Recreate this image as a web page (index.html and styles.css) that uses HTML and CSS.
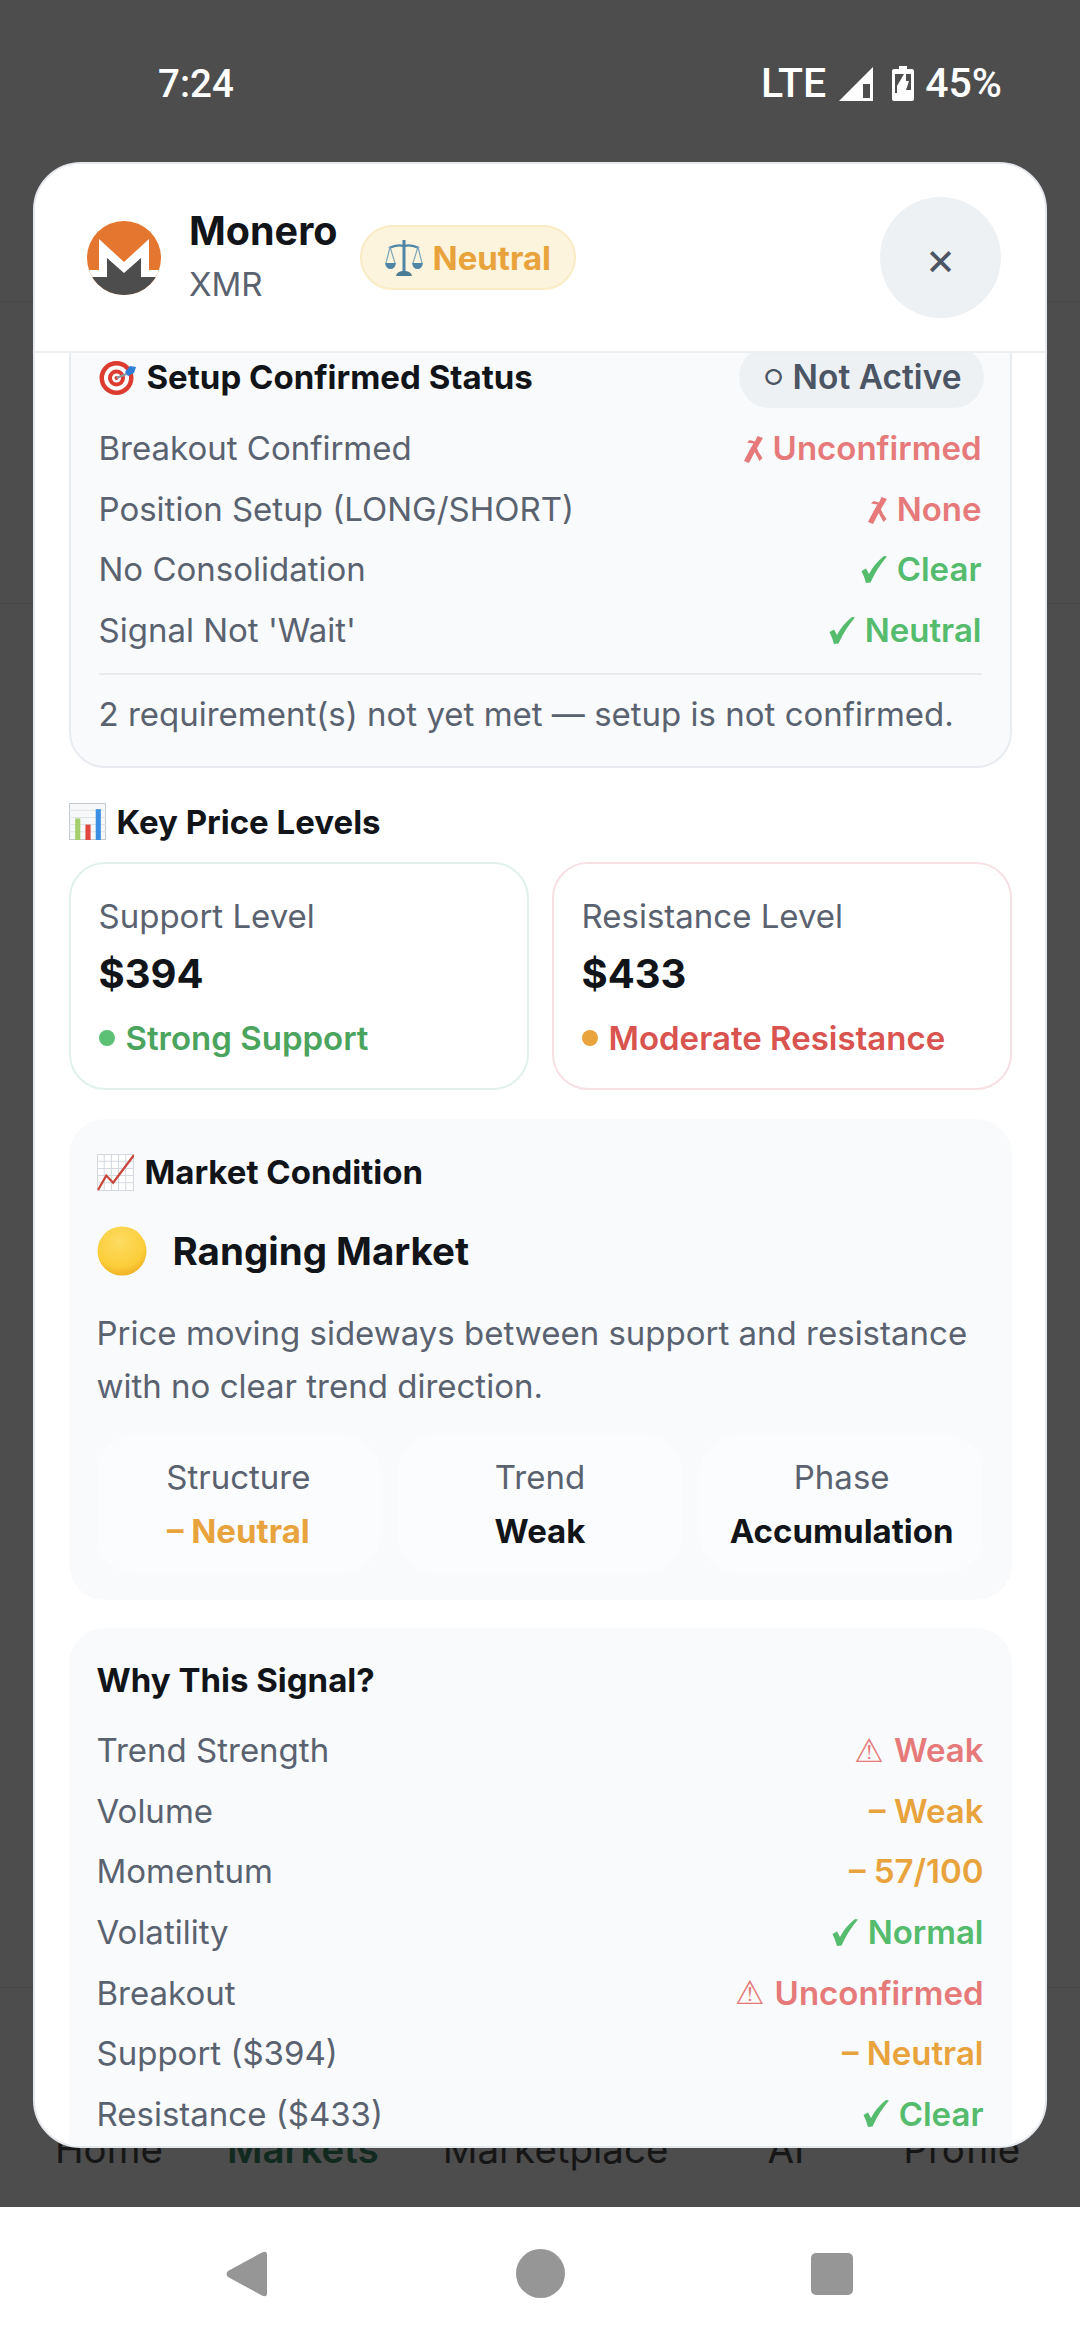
FILE: index.html
```html
<!DOCTYPE html>
<html lang="en">
<head>
    <meta charset="UTF-8">
    <meta name="viewport" content="width=device-width, initial-scale=1.0">
    <title>Monero - XMR</title>
    <link rel="stylesheet" href="styles.css">
</head>
<body>
    <svg class="icon-defs">
        <symbol id="check" viewBox="0 0 26 27"><path d="M0.5 15L5 12.5L8 18Q13 8 23 0L26 0.5Q16 12 9.5 26.5L5 27Q3 20 0.5 15Z"/></symbol>
        <symbol id="cross" viewBox="0 0 19 27"><path d="M13.5 0L19 2Q12 13 5 27L0 25Q6 13 9.5 7.5L3 6.5L5.5 4L11 5.5Z"/><path d="M9 12.5L12 10Q14 16 18.5 22L15.5 25Q12 19 9 12.5Z"/></symbol>
    </svg>
    <div class="screen">
        <div class="backdrop">
            <div class="status-bar">
                <span class="clock">7:24</span>
                <div class="status-right">
                    <span>LTE</span>
                    <svg class="signal" viewBox="0 0 34 34"><path d="M34 0V34H0Z" fill="#fff"/><path d="M24 17H31V31H24Z" fill="#4d4d4d"/></svg>
                    <svg class="battery" viewBox="0 0 22 35"><path d="M7 0H15V3H20Q22 3 22 5V33Q22 35 20 35H2Q0 35 0 33V5Q0 3 2 3H7Z" fill="#fff"/><path d="M3 8H12L5 20V27H3Z" fill="#4d4d4d"/><path d="M14 8H19V24H14L17 15H14Z" fill="#4d4d4d"/><path d="M13 7L6 20H10L8 31L16 16H12Z" fill="#fff"/></svg>
                    <span class="battery-pct">45%</span>
                </div>
            </div>
            <div class="tab-labels">
                <span>Home</span>
                <span class="tab-active">Markets</span>
                <span>Marketplace</span>
                <span class="tab-wide">AI</span>
                <span class="tab-wide">Profile</span>
            </div>
        </div>

        <div class="modal">
            <div class="modal-header">
                <svg class="coin" viewBox="0 0 74 74">
                    <defs><clipPath id="coinClip"><circle cx="37" cy="37" r="37"/></clipPath></defs>
                    <g clip-path="url(#coinClip)">
                        <rect width="74" height="74" fill="#e4762f"/>
                        <path d="M12 18L37 41L62 18V49H74V56H0V49H12Z" fill="#fff"/>
                        <path d="M20 37L37 52L54 37V56H74V74H0V56H20Z" fill="#4d4d4d"/>
                    </g>
                </svg>
                <div class="coin-name">
                    <div class="coin-title">Monero</div>
                    <div class="coin-symbol">XMR</div>
                </div>
                <div class="signal-badge">
                    <svg class="scales" viewBox="0 0 38 38">
                        <path d="M19 1V33" stroke="#4f86a6" stroke-width="3" fill="none"/>
                        <path d="M4 9Q12 5 19 7Q26 5 34 9" stroke="#4f86a6" stroke-width="2.4" fill="none"/>
                        <path d="M5 8L1 24M5 8L10 24M33 8L28 24M33 8L37 24" stroke="#7fa6b8" stroke-width="1.2" fill="none"/>
                        <path d="M0 24H11Q10 30 5.5 30Q1 30 0 24ZM27 24H38Q37 30 32.5 30Q28 30 27 24Z" fill="#4f86a6"/>
                        <path d="M11 37Q12 32 19 32Q26 32 27 37Z" fill="#4a7c96"/>
                    </svg>
                    <span>Neutral</span>
                </div>
                <button class="close-btn">×</button>
            </div>

            <div class="modal-body">
                <div class="setup-card">
                    <div class="setup-head">
                        <div class="card-title">
                            <svg class="emoji" viewBox="0 0 37 37">
                                <circle cx="17.5" cy="19" r="17" fill="#dd3b30"/>
                                <circle cx="17.5" cy="19" r="12.5" fill="#fff"/>
                                <circle cx="17.5" cy="19" r="8.5" fill="#dd3b30"/>
                                <circle cx="17.5" cy="19" r="4.5" fill="#fff"/>
                                <circle cx="17.5" cy="19" r="2" fill="#dd3b30"/>
                                <path d="M17.5 19L30 14" stroke="#8a9aa5" stroke-width="2"/>
                                <path d="M26 13L31 7L37 8L35 14L29 17Z" fill="#2f7fd6"/>
                            </svg>
                            <span>Setup Confirmed Status</span>
                        </div>
                        <div class="status-pill"><span class="ring">○</span> Not Active</div>
                    </div>
                    <div class="row"><span>Breakout Confirmed</span><span class="val bad"><svg class="mark-cross"><use href="#cross"/></svg> Unconfirmed</span></div>
                    <div class="row"><span>Position Setup (LONG/SHORT)</span><span class="val bad"><svg class="mark-cross"><use href="#cross"/></svg> None</span></div>
                    <div class="row"><span>No Consolidation</span><span class="val good"><svg class="mark-check"><use href="#check"/></svg> Clear</span></div>
                    <div class="row"><span>Signal Not 'Wait'</span><span class="val good"><svg class="mark-check"><use href="#check"/></svg> Neutral</span></div>
                    <div class="setup-note">2 requirement(s) not yet met — setup is not confirmed.</div>
                </div>

                <div class="section-title levels-title">
                    <svg class="emoji" viewBox="0 0 36 36">
                        <path d="M0.5 0.5H35.5V35.5H0.5Z" fill="#f7f8fa" stroke="#c3cad0"/>
                        <path d="M0 7H36M0 14H36M0 21H36M0 28H36" stroke="#dfe4e8" stroke-width="1"/>
                        <path d="M6 15H11V36H6Z" fill="#a5cf6d"/>
                        <path d="M16 21H21V36H16Z" fill="#e0483f"/>
                        <path d="M26 6H31V36H26Z" fill="#3d8fe3"/>
                    </svg>
                    <span>Key Price Levels</span>
                </div>
                <div class="levels">
                    <div class="level-card support">
                        <div class="level-label">Support Level</div>
                        <div class="level-price">$394</div>
                        <div class="level-note note-green"><span class="dot dot-green"></span>Strong Support</div>
                    </div>
                    <div class="level-card resist">
                        <div class="level-label">Resistance Level</div>
                        <div class="level-price">$433</div>
                        <div class="level-note note-red"><span class="dot dot-orange"></span>Moderate Resistance</div>
                    </div>
                </div>

                <div class="panel market">
                    <div class="section-title">
                        <svg class="emoji" viewBox="0 0 36 36">
                            <path d="M0.5 0.5H35.5V35.5H0.5Z" fill="#fff" stroke="#d3d9de"/>
                            <path d="M7 0V36M14 0V36M21 0V36M28 0V36M0 7H36M0 14H36M0 21H36M0 28H36" stroke="#d3d9de" stroke-width="1"/>
                            <path d="M1 35L9 21L15.7 28L36 1" stroke="#c8473d" stroke-width="2.2" fill="none"/>
                        </svg>
                        <span>Market Condition</span>
                    </div>
                    <div class="condition">
                        <svg class="condition-dot" viewBox="0 0 50 50">
                            <defs><radialGradient id="sun" cx="45%" cy="30%" r="75%"><stop offset="0" stop-color="#fddc62"/><stop offset="0.7" stop-color="#fbcd3a"/><stop offset="1" stop-color="#eeaa1c"/></radialGradient></defs>
                            <circle cx="25" cy="25" r="24.5" fill="url(#sun)"/>
                        </svg>
                        <span>Ranging Market</span>
                    </div>
                    <p class="condition-text">Price moving sideways between support and resistance with no clear trend direction.</p>
                    <div class="metrics">
                        <div class="metric"><div class="metric-label">Structure</div><div class="metric-value mid">– Neutral</div></div>
                        <div class="metric"><div class="metric-label">Trend</div><div class="metric-value">Weak</div></div>
                        <div class="metric"><div class="metric-label">Phase</div><div class="metric-value">Accumulation</div></div>
                    </div>
                </div>

                <div class="panel why">
                    <div class="why-title">Why This Signal?</div>
                    <div class="row"><span>Trend Strength</span><span class="val bad"><i class="warn">⚠</i> Weak</span></div>
                    <div class="row"><span>Volume</span><span class="val mid">– Weak</span></div>
                    <div class="row"><span>Momentum</span><span class="val mid">– 57/100</span></div>
                    <div class="row"><span>Volatility</span><span class="val good"><svg class="mark-check"><use href="#check"/></svg> Normal</span></div>
                    <div class="row"><span>Breakout</span><span class="val bad"><i class="warn">⚠</i> Unconfirmed</span></div>
                    <div class="row"><span>Support ($394)</span><span class="val mid">– Neutral</span></div>
                    <div class="row"><span>Resistance ($433)</span><span class="val good"><svg class="mark-check"><use href="#check"/></svg> Clear</span></div>
                </div>
            </div>
        </div>

        <div class="nav-bar">
            <svg class="nav-back" viewBox="0 0 41 46"><path d="M36 1.5Q41 -1 41 4V42Q41 47 36 44.5L2 26Q-1 23 2 20Z" fill="#969696"/></svg>
            <span class="nav-home"></span>
            <span class="nav-square"></span>
        </div>
    </div>
</body>
</html>
```

FILE: styles.css
```css
* {
    box-sizing: border-box;
}
html, body {
    margin: 0;
    padding: 0;
}
body {
    font-family: "Inter", "Liberation Sans", "DejaVu Sans", sans-serif;
    color: #111418;
}
.icon-defs {
    display: none;
}
.screen {
    position: relative;
    width: 1080px;
    height: 2340px;
    display: flex;
    flex-direction: column;
    overflow: hidden;
}

/* what sits behind the modal */
.backdrop {
    height: 2207px;
    background-color: #4d4d4d;
    background-image:
        linear-gradient(to bottom, transparent 301px, #484848 301px, #484848 302px, transparent 302px),
        linear-gradient(to bottom, transparent 603px, #484848 603px, #484848 604px, transparent 604px),
        linear-gradient(to bottom, transparent 1987px, #484848 1987px, #484848 1988px, transparent 1988px);
    display: flex;
    flex-direction: column;
    justify-content: space-between;
}
.status-bar {
    display: flex;
    justify-content: space-between;
    align-items: center;
    padding: 58px 78px 0 158px;
    height: 108px;
    color: #fff;
    font-family: "Roboto", sans-serif;
    font-size: 41px;
    font-weight: 500;
}
.clock {
    font-size: 38.5px;
}
.status-right {
    display: flex;
    align-items: center;
}
.signal {
    width: 34px;
    height: 34px;
    margin: 2px 0 0 13px;
}
.battery {
    width: 22px;
    height: 35px;
    margin-left: 19px;
}
.battery-pct {
    margin-left: 11px;
}
.tab-labels {
    display: flex;
    gap: 64px;
    padding: 0 0 35px 55px;
    font-size: 38.5px;
    color: #161616;
}
.tab-active {
    color: #12291f;
    font-weight: 600;
}
.tab-wide {
    margin-left: 35px;
}

/* modal */
.modal {
    position: absolute;
    left: 33px;
    top: 162px;
    width: 1014px;
    height: 1986px;
    background: #fff;
    border: 2px solid #e5e9ee;
    border-radius: 48px;
    display: flex;
    flex-direction: column;
    overflow: hidden;
}
.modal-header {
    height: 189px;
    flex-shrink: 0;
    display: flex;
    align-items: center;
    padding: 0 44px 0 52px;
    border-bottom: 2px solid #eceff2;
    position: relative;
    z-index: 1;
    background: #fff;
}
.coin {
    width: 74px;
    height: 74px;
    margin-right: 28px;
}
.coin-name {
    margin-bottom: 3px;
}
.coin-title {
    font-size: 39.5px;
    font-weight: 700;
    line-height: 46px;
}
.coin-symbol {
    font-size: 33px;
    color: #5a6270;
    line-height: 40px;
    margin-top: 10px;
}
.signal-badge {
    display: flex;
    align-items: center;
    gap: 10px;
    height: 65px;
    padding: 0 23px;
    margin-left: 22px;
    background: #fdf4de;
    border: 2px solid #f9ebc4;
    border-radius: 33px;
    color: #e8a33d;
    font-size: 33px;
    font-weight: 700;
}
.scales {
    width: 38px;
    height: 38px;
}
.close-btn {
    margin-left: auto;
    width: 121px;
    height: 121px;
    border: none;
    border-radius: 50%;
    background: #eef1f4;
    color: #4b5563;
    font-family: "Inter", sans-serif;
    font-size: 46px;
    padding: 0;
}

.modal-body {
    flex: 1;
    overflow: hidden;
    padding: 0 33.5px;
    margin-top: -35px;
}

.row {
    display: flex;
    justify-content: space-between;
    align-items: center;
    height: 60.6px;
    font-size: 33px;
    color: #5a6270;
}
.val {
    display: inline-flex;
    align-items: center;
    gap: 10px;
    font-weight: 600;
}
.mark-check {
    width: 26px;
    height: 27px;
    fill: currentColor;
}
.mark-cross {
    width: 19px;
    height: 27px;
    margin-top: 3px;
    fill: currentColor;
}
.warn {
    font-style: normal;
    font-family: "DejaVu Sans", sans-serif;
}
.bad {
    color: #e67a7a;
}
.good {
    color: #55bc6e;
}
.mid {
    color: #e8a33d;
}

.setup-card {
    background: #f8fafc;
    border: 2px solid #e8ecf0;
    border-radius: 36px;
    padding: 26px 28px 0;
    height: 450px;
}
.setup-head {
    display: flex;
    justify-content: space-between;
    align-items: center;
    margin-bottom: 10px;
}
.card-title,
.section-title {
    display: flex;
    align-items: center;
    gap: 11px;
    font-size: 33px;
    font-weight: 700;
}
.emoji {
    width: 37px;
    height: 37px;
}
.status-pill {
    height: 62px;
    padding: 0 22px 0 24px;
    margin-right: -2px;
    display: flex;
    align-items: center;
    gap: 9px;
    border-radius: 31px;
    background: #eef1f4;
    color: #4b5563;
    font-size: 33.5px;
    font-weight: 600;
}
.ring {
    font-size: 22px;
}
.setup-note {
    margin-top: 13px;
    padding-top: 19px;
    border-top: 2px solid #e9ecef;
    font-size: 33px;
    color: #5a6270;
    line-height: 40px;
}

.levels-title {
    margin-top: 35px;
    height: 37px;
}
.levels {
    display: grid;
    grid-template-columns: 1fr 1fr;
    gap: 23px;
    margin-top: 22px;
}
.level-card {
    height: 228px;
    padding: 32px 28px 0;
    background: #fff;
    border: 2px solid;
    border-radius: 36px;
}
.support {
    border-color: #e0f1ec;
}
.resist {
    border-color: #f7e0e3;
}
.level-label {
    font-size: 33px;
    color: #5a6270;
    line-height: 40px;
}
.level-price {
    font-size: 40px;
    font-weight: 700;
    line-height: 48px;
    margin-top: 14px;
}
.level-note {
    display: flex;
    align-items: center;
    gap: 11px;
    font-size: 33px;
    font-weight: 600;
    line-height: 40px;
    margin-top: 19.5px;
}
.dot {
    width: 16px;
    height: 16px;
    border-radius: 50%;
}
.dot-green {
    background: #5cc174;
}
.dot-orange {
    background: #e8a33d;
}
.note-green {
    color: #4ba45e;
}
.note-red {
    color: #d9534f;
}

.panel {
    background: #f8fafc;
    border-radius: 36px;
    padding: 0 28px;
}
.market {
    margin-top: 29px;
    height: 481px;
    padding-top: 33px;
}
.condition {
    display: flex;
    align-items: center;
    gap: 26px;
    margin-top: 34px;
    font-size: 38.5px;
    font-weight: 700;
}
.condition-dot {
    width: 50px;
    height: 50px;
}
.condition-text {
    margin: 31px 0 0;
    font-size: 33px;
    line-height: 53px;
    color: #5a6270;
}
.metrics {
    display: grid;
    grid-template-columns: repeat(3, 1fr);
    gap: 18px;
    margin-top: 23px;
}
.metric {
    height: 136px;
    background: #fbfcfd;
    border-radius: 36px;
    text-align: center;
    padding-top: 21px;
}
.metric-label {
    font-size: 33px;
    color: #5a6270;
    line-height: 40px;
}
.metric-value {
    font-size: 33px;
    font-weight: 700;
    line-height: 40px;
    margin-top: 14px;
}

.why {
    margin-top: 28px;
    height: 560px;
    padding-top: 32px;
}
.why-title {
    font-size: 33px;
    font-weight: 700;
    line-height: 40px;
    margin-bottom: 20px;
}

/* android nav */
.nav-bar {
    height: 133px;
    background: #fff;
    position: relative;
    display: flex;
    align-items: center;
}
.nav-back {
    width: 41px;
    height: 46px;
    margin-left: 226px;
}
.nav-home {
    width: 49px;
    height: 49px;
    margin-left: 249px;
    border-radius: 50%;
    background: #969696;
}
.nav-square {
    width: 42px;
    height: 42px;
    margin-left: 246px;
    border-radius: 5px;
    background: #969696;
}
```
